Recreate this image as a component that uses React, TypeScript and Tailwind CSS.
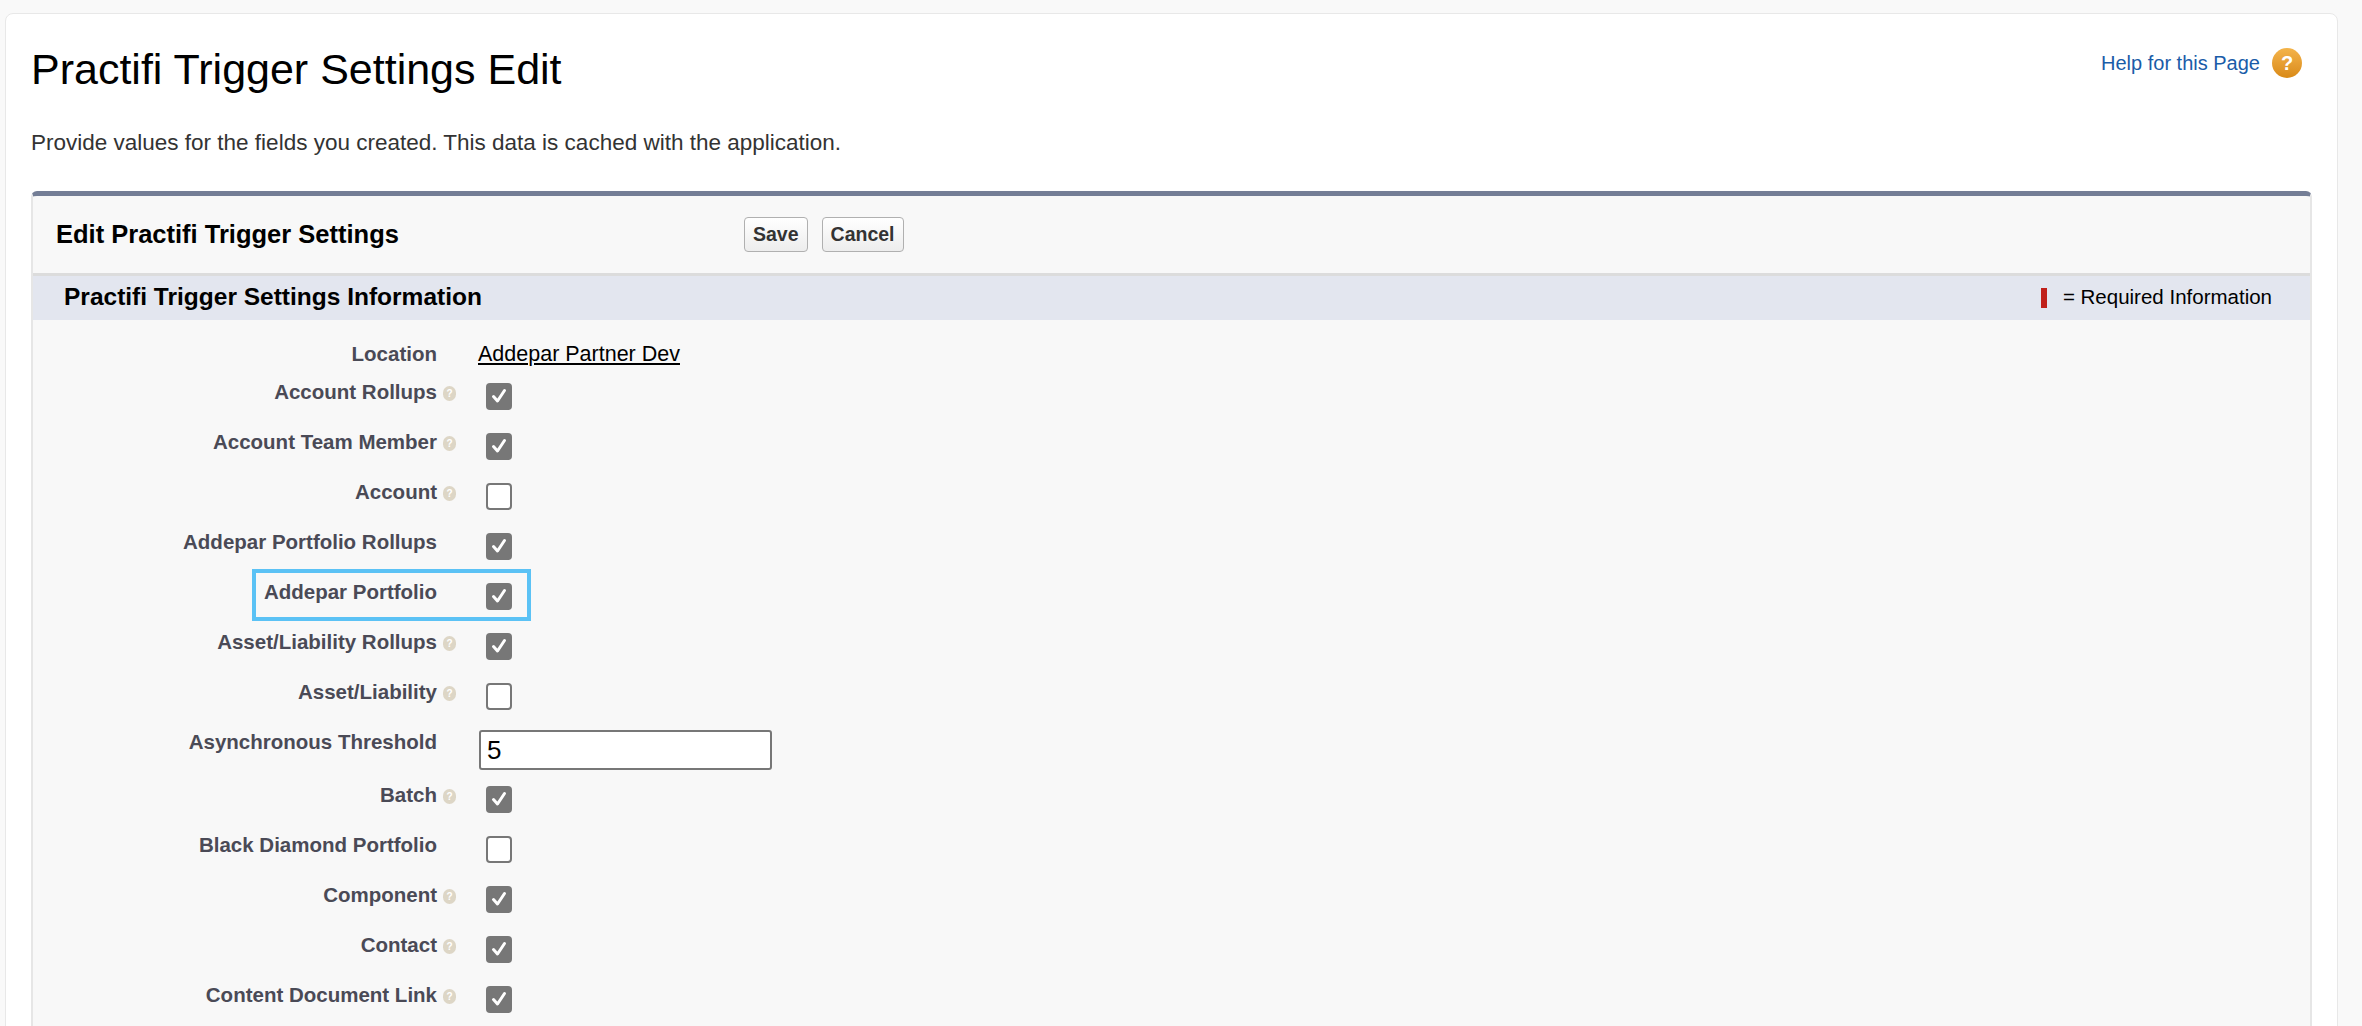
import React from "react";

const rows: { label: string; help: boolean; checked: boolean }[] = [
  { label: "Account Rollups", help: true, checked: true },
  { label: "Account Team Member", help: true, checked: true },
  { label: "Account", help: true, checked: false },
  { label: "Addepar Portfolio Rollups", help: false, checked: true },
  { label: "Addepar Portfolio", help: false, checked: true },
  { label: "Asset/Liability Rollups", help: true, checked: true },
  { label: "Asset/Liability", help: true, checked: false },
];
const rows2: { label: string; help: boolean; checked: boolean }[] = [
  { label: "Batch", help: true, checked: true },
  { label: "Black Diamond Portfolio", help: false, checked: false },
  { label: "Component", help: true, checked: true },
  { label: "Contact", help: true, checked: true },
  { label: "Content Document Link", help: true, checked: true },
];

function Help() {
  return (
    <span className="inline-flex w-[13px] h-[15px] rounded-full bg-[#ddd6c6] text-white text-[10px] font-bold items-center justify-center leading-none mt-[4px]">
      ?
    </span>
  );
}

function Box({ checked }: { checked: boolean }) {
  return checked ? (
    <div className="w-[26px] h-[27px] rounded-[4px] bg-[#777777] flex items-center justify-center mt-[3px] ml-[7px]">
      <svg width="18" height="18" viewBox="0 0 18 18">
        <path d="M3.5 9.5 L7.5 14 L14.5 3.5" stroke="white" strokeWidth="3" fill="none" strokeLinecap="round" strokeLinejoin="round" />
      </svg>
    </div>
  ) : (
    <div className="w-[26px] h-[27px] rounded-[4px] bg-white border-2 border-[#777777] mt-[3px] ml-[7px]" />
  );
}

function Row({ label, help, checked, hl }: { label: string; help: boolean; checked: boolean; hl?: boolean }) {
  return (
    <div className="relative flex h-[50px]">
      {hl && <div className="absolute left-[219px] top-[-11px] w-[279px] h-[52px] border-4 border-[#5bc2f5]" />}
      <div className="w-[404px] text-right text-[20.5px] leading-[24px] font-bold text-[#4a4a56]">{label}</div>
      <div className="w-[20px] pl-[6px]">{help && <Help />}</div>
      <div className="ml-[22px]">
        <Box checked={checked} />
      </div>
    </div>
  );
}

export default function App() {
  return (
    <div className="w-[2362px] h-[1026px] bg-[#f9f9f9] overflow-hidden pt-[13px] pl-[5px] pr-[24px]" style={{ fontFamily: '"Liberation Sans", Arial, sans-serif' }}>
      <div className="bg-white border border-[#e8e8e8] rounded-[8px] h-[1040px] pl-[25px] pr-[25px]">
        <div className="flex justify-between items-start pt-[30px]">
          <h1 className="text-[43px] leading-[50px] text-black">Practifi Trigger Settings Edit</h1>
          <div className="flex items-center gap-[12px] mt-[4px] mr-[10px]">
            <span className="text-[20px] text-[#1a5ca8]">Help for this Page</span>
            <div className="w-[30px] h-[30px] rounded-full bg-gradient-to-b from-[#f4b44a] to-[#d98a14] text-white font-bold text-[20px] flex items-center justify-center">?</div>
          </div>
        </div>
        <p className="text-[22.5px] text-[#333] mt-[32px]">Provide values for the fields you created. This data is cached with the application.</p>
        <div className="mt-[31px] border-t-[5px] border-[#747e96] rounded-t-[6px] border-x-2 border-x-[#e6e6e6] bg-[#f8f8f8] h-[900px]">
          <div className="flex items-center h-[80px] border-b-[3px] border-[#dcdcdc]">
            <div className="w-[460px] pl-[23px] text-[25.5px] font-bold text-black">Edit Practifi Trigger Settings</div>
            <div className="flex gap-[14px] ml-[251px]">
              <button className="h-[35px] px-[8px] border border-[#b0b0b0] rounded-[4px] bg-gradient-to-b from-white to-[#ededed] text-[19.5px] font-bold text-[#333]">Save</button>
              <button className="h-[35px] px-[8px] border border-[#b0b0b0] rounded-[4px] bg-gradient-to-b from-white to-[#ededed] text-[19.5px] font-bold text-[#333]">Cancel</button>
            </div>
          </div>
          <div className="flex items-center justify-between h-[44px] bg-[#e3e6ef] pl-[31px] pr-[38px]">
            <span className="text-[24.5px] font-bold text-black">Practifi Trigger Settings Information</span>
            <div className="flex items-center gap-[16px]">
              <div className="w-[6px] h-[20px] bg-[#c0201a]" />
              <span className="text-[20.5px] text-black">= Required Information</span>
            </div>
          </div>
          <div className="pt-[22px]">
            <div className="flex h-[38px]">
              <div className="w-[404px] text-right text-[20.5px] leading-[24px] font-bold text-[#4a4a56]">Location</div>
              <div className="w-[20px]" />
              <div className="ml-[21px] text-[21.5px] leading-[24px] underline text-black">Addepar Partner Dev</div>
            </div>
            {rows.map((r) => (
              <Row key={r.label} {...r} hl={r.label === "Addepar Portfolio"} />
            ))}
            <div className="flex h-[53px]">
              <div className="w-[404px] text-right text-[20.5px] leading-[24px] font-bold text-[#4a4a56]">Asynchronous Threshold</div>
              <div className="w-[20px]" />
              <div className="ml-[22px] w-[293px] h-[40px] border-2 border-[#777] rounded-[3px] bg-white px-[6px] text-[26px] leading-[36px] text-black">5</div>
            </div>
            {rows2.map((r) => (
              <Row key={r.label} {...r} />
            ))}
          </div>
        </div>
      </div>
    </div>
  );
}
